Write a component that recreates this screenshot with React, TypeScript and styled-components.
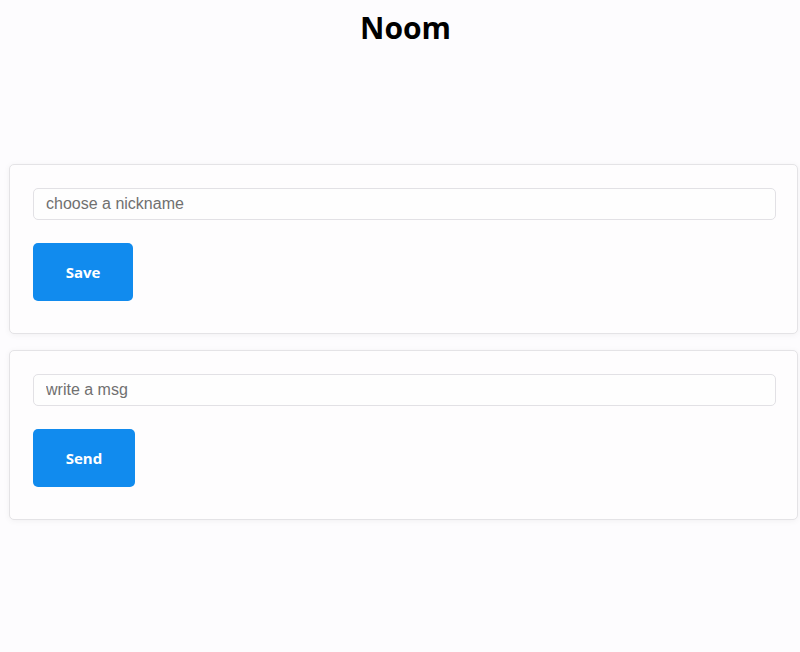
import React from "react";
import styled, { createGlobalStyle } from "styled-components";

const Global = createGlobalStyle`
  html, body { margin: 0; padding: 0; background: #fdfcfe; }
  body { font-family: "Open Sans", "Noto Sans", sans-serif; color: #000; }
  * { box-sizing: border-box; }
`;

const Page = styled.main`
  min-height: 652px;
  padding: 0 2px 0 9px;
  display: flex;
  flex-direction: column;
`;

const Header = styled.header`
  height: 164px;
  display: flex;
  justify-content: center;
  align-items: flex-start;
`;

const Title = styled.h1`
  margin: 6px 0 0 4px;
  font-family: "Open Sans", "Noto Sans", sans-serif;
  font-weight: 700;
  font-size: 30px;
  line-height: 44px;
`;

const Stack = styled.div`
  display: flex;
  flex-direction: column;
  gap: 16px;
`;

const Card = styled.form`
  background: #fefdfe;
  border: 1px solid #e4e3e6;
  border-radius: 5px;
  box-shadow: 0 1px 6px rgba(0, 0, 0, 0.05);
  padding: 23px 21px 32px 23px;
  display: flex;
  flex-direction: column;
  align-items: flex-start;
  gap: 23px;
`;

const Input = styled.input`
  width: 100%;
  height: 32px;
  border: 1px solid #e2e1e5;
  border-radius: 5px;
  background: #fefefe;
  padding: 0 12px;
  font-family: "Liberation Sans", Arial, sans-serif;
  font-size: 16px;
  color: #222;
  outline: none;
  &::placeholder { color: #707070; }
`;

const Button = styled.button<{ $w: number }>`
  width: ${(p) => p.$w}px;
  height: 58px;
  border: none;
  border-radius: 5px;
  background: #118bee;
  color: #fff;
  font-family: "Open Sans", "Noto Sans", sans-serif;
  font-weight: 700;
  font-size: 15px;
  cursor: pointer;
`;

export default function App() {
  return (
    <>
      <Global />
      <Page>
        <Header>
          <Title>Noom</Title>
        </Header>
        <Stack>
          <Card onSubmit={(e) => e.preventDefault()}>
            <Input placeholder="choose a nickname" />
            <Button $w={100}>Save</Button>
          </Card>
          <Card onSubmit={(e) => e.preventDefault()}>
            <Input placeholder="write a msg" />
            <Button $w={102}>Send</Button>
          </Card>
        </Stack>
      </Page>
    </>
  );
}
